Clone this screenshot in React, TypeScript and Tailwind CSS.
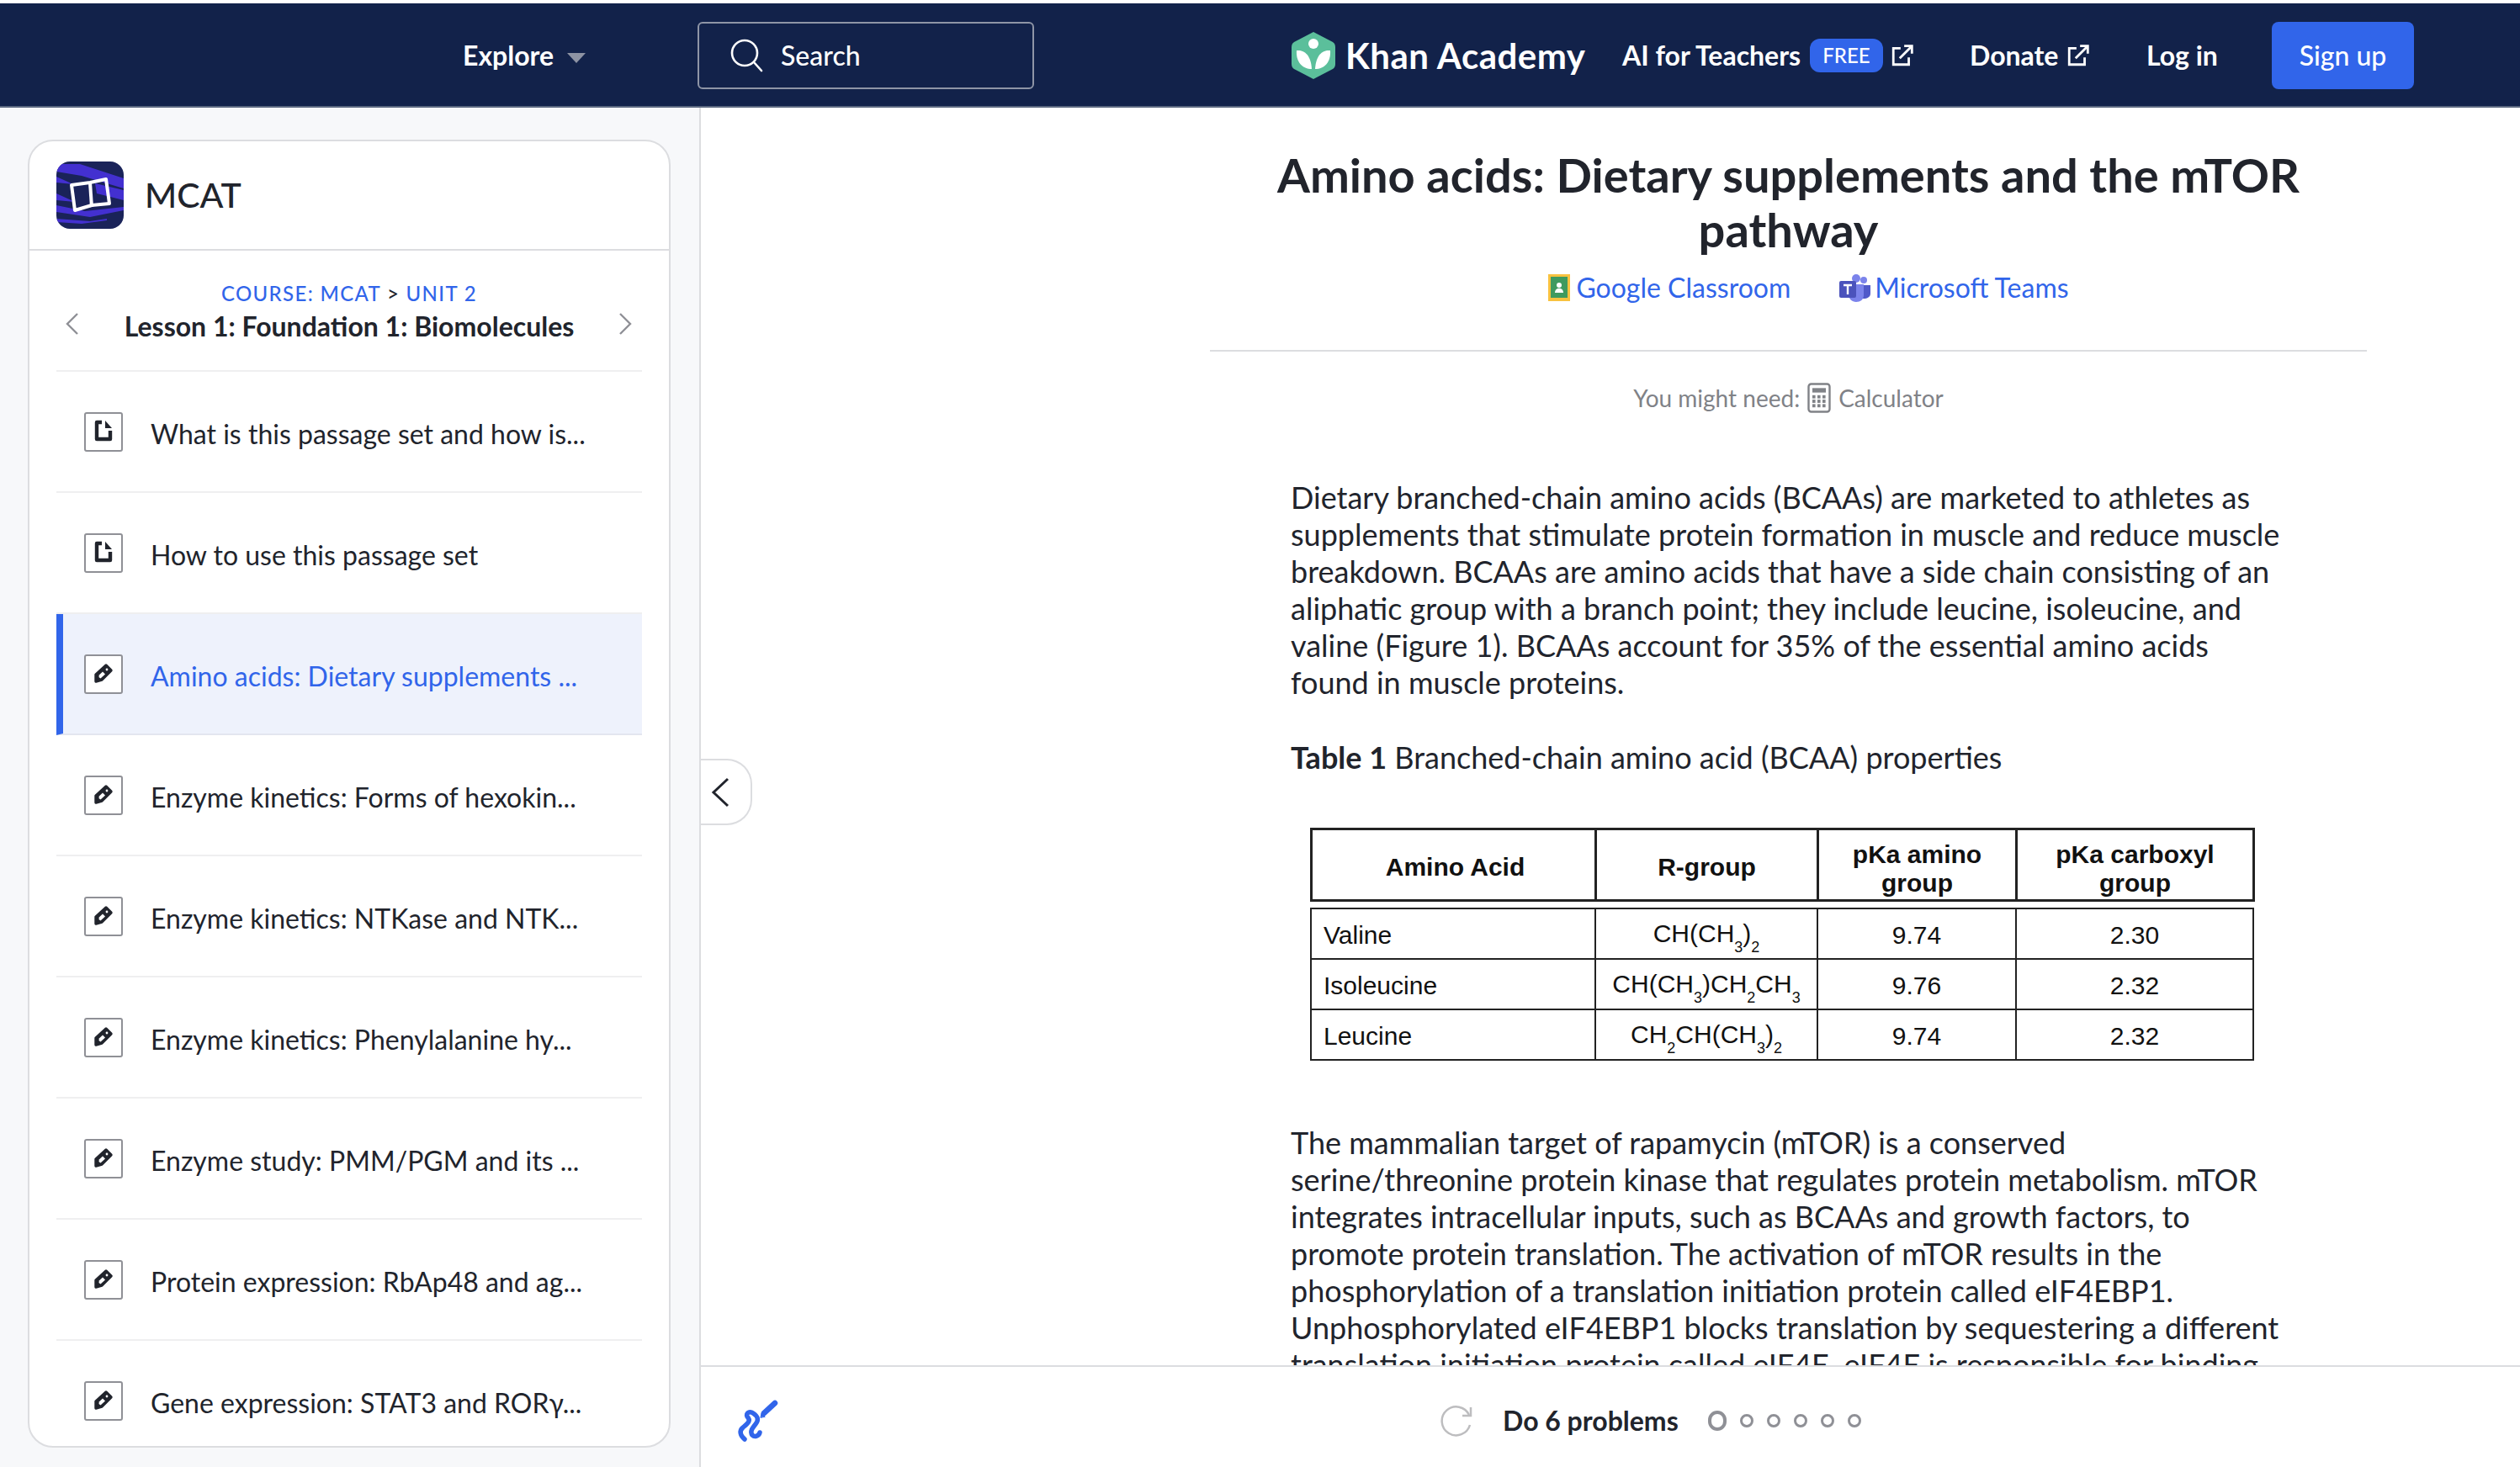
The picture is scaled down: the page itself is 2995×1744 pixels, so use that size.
import React from "react";

const lessons = [
  { t: "What is this passage set and how is...", k: "doc" },
  { t: "How to use this passage set", k: "doc" },
  { t: "Amino acids: Dietary supplements ...", k: "pen", active: true },
  { t: "Enzyme kinetics: Forms of hexokin...", k: "pen" },
  { t: "Enzyme kinetics: NTKase and NTK...", k: "pen" },
  { t: "Enzyme kinetics: Phenylalanine hy...", k: "pen" },
  { t: "Enzyme study: PMM/PGM and its ...", k: "pen" },
  { t: "Protein expression: RbAp48 and ag...", k: "pen" },
  { t: "Gene expression: STAT3 and RORγ...", k: "pen" },
];

function ExtIcon() {
  return (
    <svg width="28" height="28" viewBox="0 0 26 26" fill="none" stroke="white" strokeWidth="2.6">
      <path d="M11 5H3v18h17v-8" />
      <path d="M10 16 23 3M15 2.5h8.5V11" />
    </svg>
  );
}

function KhanLogo() {
  return (
    <svg width="52" height="56" viewBox="0 0 52 56">
      <path d="M26 0 L49 12 Q52 14 52 18 V38 Q52 42 49 44 L26 56 L3 44 Q0 42 0 38 V18 Q0 14 3 12 Z" fill="#5bbf9b" />
      <circle cx="26" cy="14" r="6" fill="white" />
      <path d="M6 22 C15 21 23 27 24 44 C13 44 5 36 6 22Z" fill="white" />
      <path d="M46 22 C37 21 29 27 28 44 C39 44 47 36 46 22Z" fill="white" />
    </svg>
  );
}

function McatLogo() {
  return (
    <svg width="80" height="80" viewBox="0 0 80 80" className="rounded-[16px] shrink-0">
      <rect width="80" height="80" fill="#1a2359" />
      <path d="M0 3H28L80 20V32L30 17L0 12Z" fill="#4330d0" />
      <path d="M0 18L20 27L0 25Z" fill="#4330d0" />
      <path d="M46 26L80 34V46L48 38Z" fill="#4330d0" />
      <path d="M0 38L22 48L0 46Z" fill="#4330d0" />
      <path d="M0 52L34 59L80 54V58L40 66L0 60Z" fill="#4330d0" />
      <path d="M0 68L40 71L60 68V70L30 74L0 72Z" fill="#4330d0" />
      <path d="M18 28 L40 25 L59 21 L63 50 L42 52 L22 58Z" fill="none" stroke="white" strokeWidth="4" strokeLinejoin="round" />
      <path d="M40 25 L42 54" stroke="white" strokeWidth="4" />
    </svg>
  );
}

function RowIcon({ k }: { k: string }) {
  return (
    <span className="w-[46px] h-[47px] shrink-0 rounded-[3px] border-2 border-[#8f9096] bg-white flex items-center justify-center">
      {k === "doc" ? (
        <svg width="22" height="26" viewBox="0 0 22 26" className="-mt-[2px]">
          <path d="M9 3H3v20h16V13" fill="none" stroke="#21242c" strokeWidth="4.4" strokeLinejoin="round" />
          <path d="M13 1l8 9h-8Z" fill="#21242c" />
        </svg>
      ) : (
        <svg width="26" height="26" viewBox="0 0 26 26" className="-mt-[3px]">
          <path d="M16 4 L22 10 L11 21 L4 23 L4 15Z" fill="#21242c" stroke="#21242c" strokeWidth="3.4" strokeLinejoin="round" />
          <path d="M12 11.5 L15 14.5 L9.5 19.5 L7.5 18 L7.8 15.5Z" fill="white" />
          <circle cx="17" cy="9" r="1.4" fill="white" />
        </svg>
      )}
    </span>
  );
}

function Sub({ children }: { children: React.ReactNode }) {
  return <sub className="text-[18px] align-[-7px] leading-none">{children}</sub>;
}

const td = "border-2 border-[#222] text-center text-[30px] leading-[34px] text-[#111] p-0 pt-[3px]";
const th = "border-[3px] border-[#222] text-center text-[30px] leading-[34px] font-bold text-[#111] p-0";
const tdl = "border-2 border-[#222] text-left pl-[14px] pt-[3px] text-[30px] leading-[34px] text-[#111]";
const cols = (
  <colgroup>
    <col className="w-[338px]" />
    <col className="w-[264px]" />
    <col className="w-[236px]" />
    <col className="w-[282px]" />
  </colgroup>
);

export default function App() {
  return (
    <div className="w-[2995px] h-[1744px] overflow-hidden flex flex-col bg-white pt-[4px] text-[#21242c] font-['Lato','Noto_Sans',sans-serif]">
      <header className="h-[124px] shrink-0 bg-[#12224a] border-b-2 border-[#5b6880] flex items-center text-white pl-[550px] pt-[2px]">
        <span className="text-[32px] font-bold w-[124px]">Explore</span>
        <svg width="22" height="12" viewBox="0 0 22 12" className="mt-[6px]">
          <path d="M0 0h22L11 12Z" fill="#8d93a3" />
        </svg>
        <div className="ml-[133px] w-[400px] h-[80px] rounded-[6px] border-2 border-[#8e95a6] flex items-center pl-[35px]">
          <svg width="42" height="42" viewBox="0 0 42 42" fill="none" stroke="white" strokeWidth="2.6" strokeLinecap="round">
            <circle cx="19" cy="18" r="15" />
            <path d="M30 29 39 39" />
          </svg>
          <span className="ml-[20px] text-[32px] font-medium">Search</span>
        </div>
        <div className="ml-[306px]"><KhanLogo /></div>
        <span className="ml-[12px] text-[42px] font-bold tracking-[0.5px] leading-none w-[285px] whitespace-nowrap">Khan Academy</span>
        <span className="ml-[44px] text-[32px] font-bold w-[213px] whitespace-nowrap">AI for Teachers</span>
        <span className="ml-[10px] w-[87px] h-[40px] rounded-[12px] bg-[#3165ea] text-[24px] font-medium flex items-center justify-center">FREE</span>
        <span className="ml-[9px]"><ExtIcon /></span>
        <span className="ml-[66px] text-[32px] font-bold w-[104px]">Donate</span>
        <span className="ml-[11px]"><ExtIcon /></span>
        <span className="ml-[67px] text-[32px] font-bold w-[84px] whitespace-nowrap">Log in</span>
        <span className="ml-[65px] w-[169px] h-[80px] rounded-[8px] bg-[#3165ea] text-[32px] font-medium flex items-center justify-center">Sign up</span>
      </header>

      <div className="flex-1 flex min-h-0">
        <aside className="w-[833px] shrink-0 bg-[#f7f8fa] border-r-2 border-[#dcdde0] pt-[38px] pl-[33px]">
          <div className="w-[764px] h-[1555px] bg-white border-2 border-[#dcdde0] rounded-[30px] overflow-hidden">
            <div className="h-[130px] border-b-2 border-[#dcdde0] flex items-center pl-[32px]">
              <McatLogo />
              <span className="ml-[25px] text-[41px] font-medium">MCAT</span>
            </div>
            <div className="mx-[32px] h-[144px] relative flex flex-col items-center border-b-2 border-[#efeff0] pt-[33px]">
              <div className="text-[24px] leading-[36px] tracking-[1.35px] font-medium text-[#3165ea]">
                COURSE: MCAT <span className="text-[#21242c]">&gt;</span> UNIT 2
              </div>
              <div className="text-[32px] leading-[44px] font-bold mt-[-1px]">Lesson 1: Foundation 1: Biomolecules</div>
              <svg width="16" height="26" viewBox="0 0 16 26" fill="none" stroke="#8f9096" strokeWidth="2.4" className="absolute left-[11px] top-[74px]">
                <path d="M14 1 2 13l12 12" />
              </svg>
              <svg width="16" height="26" viewBox="0 0 16 26" fill="none" stroke="#8f9096" strokeWidth="2.4" className="absolute right-[12px] top-[74px]">
                <path d="M2 1l12 12L2 25" />
              </svg>
            </div>
            {lessons.map((l) => (
              <div
                key={l.t}
                className={
                  "mx-[32px] h-[144px] flex items-center border-b-2 " +
                  (l.active
                    ? "bg-[#eef2fc] border-l-[8px] border-l-[#3165ea] border-b-[#e3e6ef] pl-[25px]"
                    : "border-[#efeff0] pl-[33px]")
                }
              >
                <RowIcon k={l.k} />
                <span className={"ml-[33px] mt-[6px] text-[32px] whitespace-nowrap " + (l.active ? "text-[#3165ea]" : "")}>{l.t}</span>
              </div>
            ))}
          </div>
        </aside>

        <main className="flex-1 min-w-0 flex flex-col relative">
          <button className="absolute left-0 top-[774px] w-[61px] h-[79px] bg-white border-2 border-l-0 border-[#dcdde0] rounded-r-[30px] flex items-center pl-[12px]">
            <svg width="22" height="36" viewBox="0 0 22 36" fill="none" stroke="#21242c" strokeWidth="3">
              <path d="M20 2 3 18l17 16" />
            </svg>
          </button>

          <div className="flex-1 min-h-0 overflow-hidden pl-[605px] pt-[47px]">
            <div className="w-[1375px]">
              <h1 className="text-[56px] leading-[65px] font-bold text-center px-[60px]">Amino acids: Dietary supplements and the mTOR pathway</h1>
              <div className="mt-[15px] pl-[48px] flex justify-center items-center text-[32px] leading-[44px] text-[#3165ea]">
                <svg width="26" height="32" viewBox="0 0 26 32" className="mr-[7px]">
                  <rect width="26" height="32" fill="#f8c23f" />
                  <rect x="3" y="3" width="20" height="25" fill="#3f9a5f" />
                  <circle cx="13" cy="13" r="3" fill="white" />
                  <path d="M8 22c0-7 10-7 10 0Z" fill="white" />
                </svg>
                <span>Google Classroom</span>
                <svg width="38" height="34" viewBox="0 0 38 34" className="ml-[58px] mr-[4px]">
                  <circle cx="29" cy="8" r="4" fill="#7b83eb" />
                  <circle cx="20" cy="6" r="5" fill="#7b83eb" />
                  <path d="M25 14h12v10c0 4-4 6-8 6s-4-2-4-4Z" fill="#5059c9" />
                  <path d="M11 13h18v13c0 5-4 8-9 8s-9-4-9-9Z" fill="#7b83eb" />
                  <rect x="0" y="9" width="20" height="20" rx="2" fill="#4b53bc" />
                  <path d="M5 14h10M10 14v11" stroke="white" strokeWidth="2.4" />
                </svg>
                <span>Microsoft Teams</span>
              </div>
              <div className="mt-[52px] border-t-2 border-[#dcdde0]" />
              <div className="mt-[35px] flex justify-center items-center text-[28px] leading-[40px] text-[#808287]">
                <span>You might need:</span>
                <svg width="28" height="36" viewBox="0 0 28 34" preserveAspectRatio="none" className="mx-[9px]" fill="#808287">
                  <rect x="1.5" y="1.5" width="25" height="31" rx="3" fill="none" stroke="#808287" strokeWidth="2.4" />
                  <rect x="6" y="6" width="16" height="5" />
                  {[14, 19, 24].map((y) =>
                    [6, 12, 18].map((x) => <rect key={x + "-" + y} x={x} y={y} width="3.6" height="3.6" />)
                  )}
                </svg>
                <span>Calculator</span>
              </div>

              <div className="mt-[76px] ml-[96px] w-[1185px] text-[36px] leading-[44px]">
                <p>
                  Dietary branched-chain amino acids (BCAAs) are marketed to athletes as supplements that stimulate protein formation in muscle and reduce muscle breakdown. BCAAs are amino acids that have a side chain consisting of an aliphatic group with a branch point; they include leucine, isoleucine, and valine (Figure 1). BCAAs account for 35% of the essential amino acids found in muscle proteins.
                </p>
                <p className="mt-[45px]">
                  <b>Table 1</b> Branched-chain amino acid (BCAA) properties
                </p>
              </div>

              <div className="mt-[62px] ml-[119px] w-[1120px] font-['Liberation_Sans',Arial,sans-serif]">
                <table className="w-full border-collapse table-fixed">
                  {cols}
                  <thead>
                    <tr className="h-[85px]">
                      <th className={th + " pt-[6px] pl-[4px]"}>Amino Acid</th>
                      <th className={th + " pt-[6px]"}>R-group</th>
                      <th className={th + " pt-[10px]"}>pKa amino<br />group</th>
                      <th className={th + " pt-[10px]"}>pKa carboxyl<br />group</th>
                    </tr>
                  </thead>
                </table>
                <table className="w-full border-collapse table-fixed mt-[7px]">
                  {cols}
                  <tbody>
                    <tr className="h-[60px]">
                      <td className={tdl}>Valine</td>
                      <td className={td}>CH(CH<Sub>3</Sub>)<Sub>2</Sub></td>
                      <td className={td}>9.74</td>
                      <td className={td}>2.30</td>
                    </tr>
                    <tr className="h-[60px]">
                      <td className={tdl}>Isoleucine</td>
                      <td className={td}>CH(CH<Sub>3</Sub>)CH<Sub>2</Sub>CH<Sub>3</Sub></td>
                      <td className={td}>9.76</td>
                      <td className={td}>2.32</td>
                    </tr>
                    <tr className="h-[60px]">
                      <td className={tdl}>Leucine</td>
                      <td className={td}>CH<Sub>2</Sub>CH(CH<Sub>3</Sub>)<Sub>2</Sub></td>
                      <td className={td}>9.74</td>
                      <td className={td}>2.32</td>
                    </tr>
                  </tbody>
                </table>
              </div>

              <div className="mt-[75px] ml-[96px] w-[1185px] text-[36px] leading-[44px]">
                <p>
                  The mammalian target of rapamycin (mTOR) is a conserved serine/threonine protein kinase that regulates protein metabolism. mTOR integrates intracellular inputs, such as BCAAs and growth factors, to promote protein translation. The activation of mTOR results in the phosphorylation of a translation initiation protein called eIF4EBP1. Unphosphorylated eIF4EBP1 blocks translation by sequestering a different translation initiation protein called eIF4E. eIF4E is responsible for binding
                </p>
              </div>
            </div>
          </div>

          <footer className="h-[121px] shrink-0 border-t-2 border-[#dcdde0] bg-white flex items-center pt-[9px]">
            <svg width="90" height="80" viewBox="0 0 90 80" className="ml-[27px] shrink-0" fill="none" stroke="#3165ea" strokeLinecap="round" strokeLinejoin="round">
              <path d="M25 62C20 58 18 52 23 48C29 43 33 40 28 35C26 31 31 28 35 31C41 35 42 39 38 44C34 49 31 53 34 57C37 60 42 58 43 54" strokeWidth="5.5" />
              <path d="M61 19 48 31" strokeWidth="6.5" />
              <path d="M44 36l1-5 4 4Z" fill="#3165ea" strokeWidth="1" />
            </svg>
            <svg width="42" height="38" viewBox="0 0 42 38" className="ml-[760px]" fill="none" stroke="#bdbdbf" strokeWidth="2.5">
              <path d="M36 12A17 17 0 1 0 37 24" />
              <path d="M38 3v10H28" />
            </svg>
            <span className="ml-[34px] text-[32px] font-bold whitespace-nowrap">Do 6 problems</span>
            <span className="ml-[35px] w-[22px] h-[24px] rounded-full border-[4px] border-[#8f9096]" />
            {[0, 1, 2, 3, 4].map((i) => (
              <span key={i} className="ml-[16px] w-[16px] h-[16px] rounded-full border-[3px] border-[#8f9096]" />
            ))}
          </footer>
        </main>
      </div>
    </div>
  );
}
